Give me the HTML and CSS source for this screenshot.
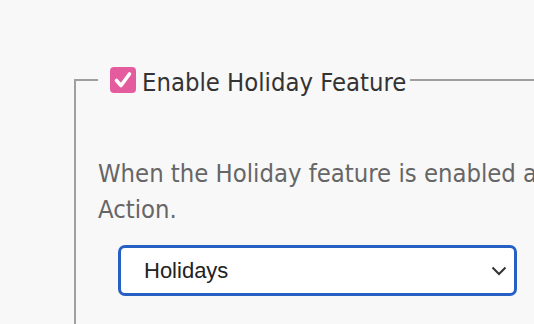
FILE: index.html
```html
<!DOCTYPE html>
<html lang="en">
<head>
  <meta charset="UTF-8" />
  <meta name="viewport" content="width=device-width, initial-scale=1" />
  <title>Holiday Settings</title>
  <link rel="stylesheet" href="styles.css">
</head>
<body>
  <div class="page">
    <fieldset class="holiday">
      <legend class="holiday-toggle">
        <label>
          <span class="check-box">
            <svg viewBox="0 0 26 26" width="26" height="26">
              <path d="M6.5 13.5 L11 18.5 L19.5 7" fill="none" stroke="#fff" stroke-width="3.6" stroke-linecap="round" stroke-linejoin="round" />
            </svg>
          </span>
          <span class="toggle-text">Enable Holiday Feature</span>
        </label>
      </legend>

      <p class="hint">When the Holiday feature is enabled and today is a holiday, calls go to the following<br>Action.</p>

      <div class="select-wrap">
        <select id="holidayAction">
          <option>Holidays</option>
          <option>Closed</option>
          <option>Voicemail</option>
        </select>
        <svg class="chevron" viewBox="0 0 16 10" width="16" height="10">
          <path d="M1.5 1.5 L8 8 L14.5 1.5" fill="none" stroke="#333" stroke-width="2" />
        </svg>
      </div>
    </fieldset>
  </div>
</body>
</html>
```

FILE: styles.css
```css
body {
  margin: 0;
  background: #f8f8f8;
  font-family: 'DejaVu Sans', Verdana, sans-serif;
  font-stretch: condensed;
  overflow: hidden;
}

.page {
  padding: 63px 0 0 74px;
}

.holiday {
  margin: 0;
  width: 640px;
  min-width: 0;
  height: 400px;
  padding: 0 0 0 22px;
  border: 2px solid #a0a0a0;
}

.holiday-toggle {
  padding: 0 4px 0 12px;
}

.holiday-toggle label {
  display: flex;
  align-items: center;
  gap: 6px;
  cursor: pointer;
}

.check-box {
  width: 26px;
  height: 26px;
  border-radius: 4px;
  background: #e55c9e;
  display: flex;
}

.toggle-text {
  font-size: 25.4px;
  line-height: 30px;
  padding-top: 4px;
  color: #333;
}

.hint {
  margin: 58px 0 0;
  font-size: 25.4px;
  line-height: 36px;
  color: #666;
  white-space: nowrap;
}

.select-wrap {
  position: relative;
  width: 399px;
  margin: 18px 0 0 20px;
}

.select-wrap select {
  appearance: none;
  width: 100%;
  height: 51px;
  box-sizing: border-box;
  padding: 0 40px 0 23px;
  border: 3px solid #2760c4;
  border-radius: 7px;
  background: #fff;
  font-family: 'Liberation Sans', Arial, sans-serif;
  font-size: 22px;
  color: #222;
  outline: none;
}

.chevron {
  position: absolute;
  right: 10px;
  top: 21px;
  pointer-events: none;
}
```
